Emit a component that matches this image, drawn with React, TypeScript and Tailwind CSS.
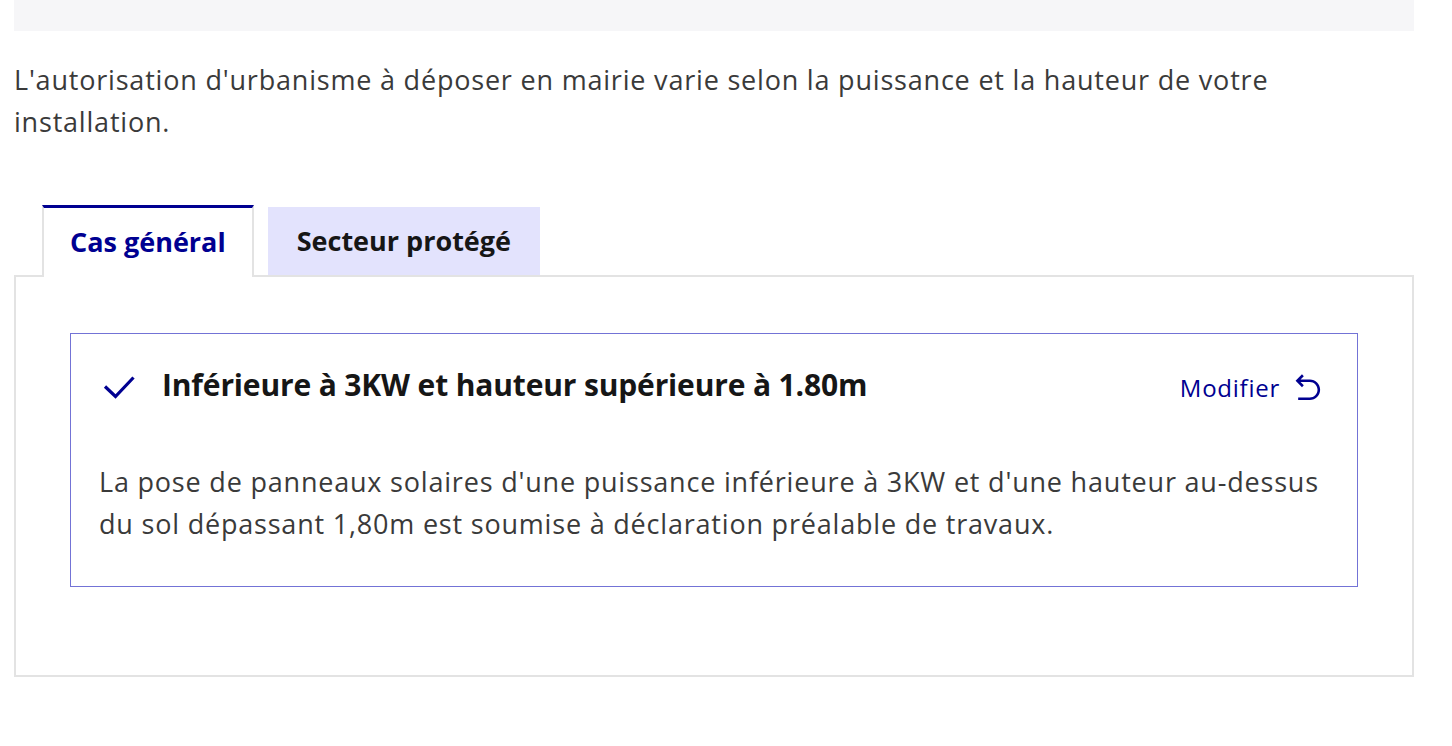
import React from 'react';
import { RiArrowGoBackLine } from 'react-icons/ri';

const App: React.FC = () => {
  return (
    <div className="min-h-screen bg-white px-[14px] text-[#3a3a3a]" style={{ fontFamily: '"Open Sans", "Noto Sans", sans-serif' }}>
      {/* top band */}
      <div className="h-[31px] bg-[#f6f6f8] w-[1400px]"></div>

      <p className="mt-[28px] text-[27px] leading-[42px] tracking-[0.8px] w-[1400px]">
        L'autorisation d'urbanisme à déposer en mairie varie selon la puissance et la hauteur de votre installation.
      </p>

      <div className="mt-[62px] w-[1400px]">
        {/* Tabs */}
        <div className="flex items-end gap-[14px] pl-[28px]">
          <button className="relative z-10 -mb-[2px] h-[72px] px-[26px] bg-white border-x-2 border-[#e3e3e3] border-t-[3px] border-t-[#000091] text-[27px] font-bold text-[#000091]">
            Cas général
          </button>
          <button className="h-[68px] px-[29px] bg-[#e3e3fd] text-[27px] font-bold text-[#161616]">
            Secteur protégé
          </button>
        </div>

        {/* Panel */}
        <div className="border-2 border-[#e3e3e3] px-[54px] pt-[56px] pb-[88px]">
          <div className="border border-[#7373d6] pl-[28px] pr-[37px] pt-[30px] pb-[41px]">
            <div className="flex items-center justify-between">
              <div className="flex items-center">
                <svg width="34" height="26" viewBox="0 0 34 26" className="ml-[3px] mt-[4px]" fill="none">
                  <path d="M3 12.5 L13.5 22.5 L31.5 3.5" stroke="#000091" strokeWidth="3.2" />
                </svg>
                <h3 className="ml-[26px] text-[30px] leading-[42px] tracking-[-0.15px] font-bold text-[#161616]">
                  Inférieure à 3KW et hauteur supérieure à 1.80m
                </h3>
              </div>
              <button className="flex items-center gap-[13px] mt-[6px] text-[24px] leading-[36px] tracking-[0.75px] text-[#000091]">
                Modifier
                <RiArrowGoBackLine className="w-[31px] h-[31px] -mr-[4px]" />
              </button>
            </div>
            <p className="mt-[55px] text-[27px] leading-[42px] tracking-[0.8px]">
              La pose de panneaux solaires d'une puissance inférieure à 3KW et d'une hauteur au-dessus du sol dépassant 1,80m est soumise à déclaration préalable de travaux.
            </p>
          </div>
        </div>
      </div>
    </div>
  );
};

export default App;
